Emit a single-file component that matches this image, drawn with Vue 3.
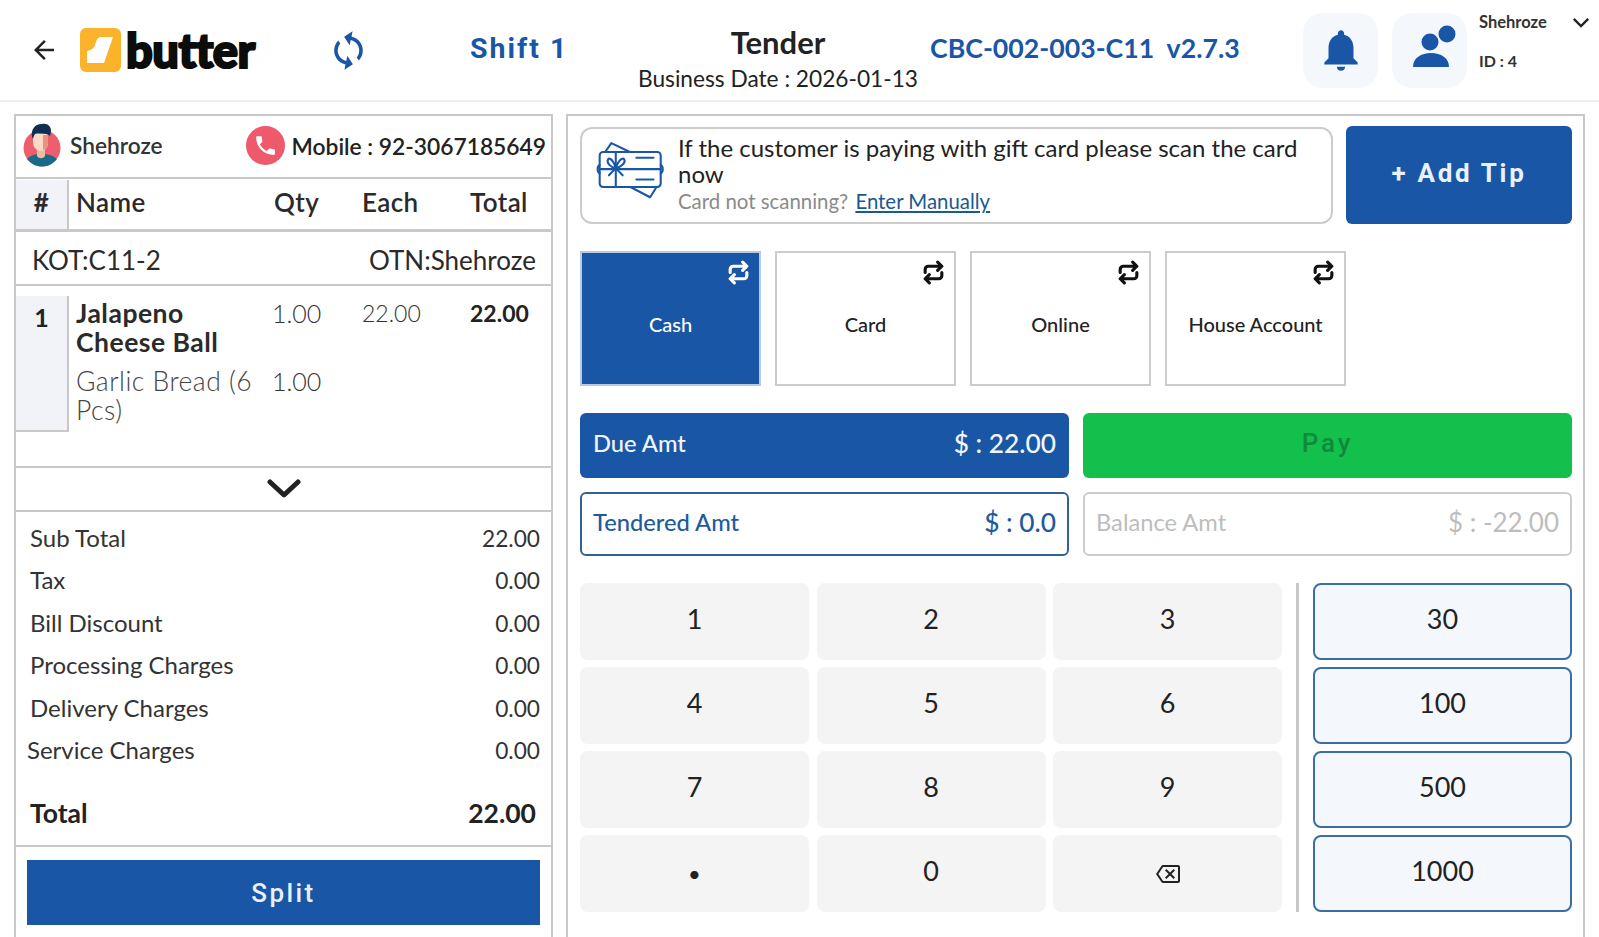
<script setup>
const tiles = [
  { label: 'Cash', active: true },
  { label: 'Card' },
  { label: 'Online' },
  { label: 'House Account' }
]
const keys = ['1', '2', '3', '4', '5', '6', '7', '8', '9', '•', '0', 'back']
const quick = ['30', '100', '500', '1000']
const summary = [
  { label: 'Sub Total', value: '22.00' },
  { label: 'Tax', value: '0.00' },
  { label: 'Bill Discount', value: '0.00' },
  { label: 'Processing Charges', value: '0.00' },
  { label: 'Delivery Charges', value: '0.00' },
  { label: 'Service Charges', value: '0.00', nudge: true }
]
</script>

<template>
  <div class="page">
    <header class="hdr">
      <svg class="back" viewBox="0 0 24 24"><path d="M20 11H7.83l5.59-5.59L12 4l-8 8 8 8 1.41-1.41L7.83 13H20v-2z" /></svg>
      <div class="logo">
        <svg class="logo-mark" viewBox="0 0 41 44">
          <rect width="41" height="44" rx="6" fill="#fbb32b" />
          <path d="M20 9H33L24 35H7V23C12 22 14 20 15 17C16 13 17 10 20 9Z" fill="#fff" />
        </svg>
        <span class="logo-text">butter</span>
      </div>
      <svg class="sync" viewBox="0 0 24 24"><path d="M12 4V1L8 5l4 4V6c3.31 0 6 2.69 6 6 0 1.01-.25 1.97-.7 2.8l1.46 1.46C19.54 15.03 20 13.57 20 12c0-4.42-3.58-8-8-8zm0 14c-3.31 0-6-2.69-6-6 0-1.01.25-1.97.7-2.8L5.24 7.74C4.46 8.97 4 10.43 4 12c0 4.42 3.58 8 8 8v3l4-4-4-4v3z" /></svg>
      <div class="shift">Shift 1</div>
      <div class="title">
        <div class="title-main">Tender</div>
        <div class="title-sub">Business Date : 2026-01-13</div>
      </div>
      <div class="code">CBC-002-003-C11&nbsp;&nbsp;v2.7.3</div>
      <div class="hbox bell">
        <svg viewBox="0 0 24 24"><path d="M12 22c1.1 0 2-.9 2-2h-4c0 1.1.89 2 2 2zm6-6v-5c0-3.07-1.64-5.64-4.5-6.32V4c0-.83-.67-1.5-1.5-1.5s-1.5.67-1.5 1.5v.68C7.63 5.36 6 7.92 6 11v5l-2 2v1h16v-1l-2-2z" /></svg>
      </div>
      <div class="hbox user">
        <svg viewBox="0 0 46 46">
          <circle cx="40" cy="7" r="8.5" />
          <circle cx="23" cy="15" r="8.5" />
          <path d="M6 40C6 31 14 26 24 26C34 26 42 31 42 40Z" />
        </svg>
      </div>
      <div class="uinfo">
        <div class="uname">
          <span>Shehroze</span>
          <svg viewBox="0 0 20 12"><path d="M2 2L10 10L18 2" /></svg>
        </div>
        <div class="uid">ID : 4</div>
      </div>
    </header>

    <main class="main">
      <section class="left">
        <div class="cust">
          <svg class="avatar" viewBox="0 0 38 44">
            <circle cx="19" cy="25" r="18.5" fill="#ee5f6e" />
            <path d="M4 36C8 32 12 31 18 31C24 31 30 32 34 36C30 41 25 43.5 19 43.5C13 43.5 8 41 4 36Z" fill="#1a6a8c" />
            <path d="M14 24H22V33C20 36 16 36 14 33Z" fill="#f0b9a2" />
            <path d="M10 11H25V20C25 25 21 28 17 28C14 28 10 24 10 20Z" fill="#fbd9c6" />
            <path d="M20 12H25V20C25 23 23 26 20 27Z" fill="#e8927f" />
            <path d="M9 14C8 7 11 1 19 1C26 0 30 5 27 13C24 10 20 11 15 10C12 10 11 12 10 16Z" fill="#0f2f52" />
          </svg>
          <span class="cust-name">Shehroze</span>
          <span class="phone">
            <svg viewBox="0 0 24 24"><path d="M6.62 10.79c1.44 2.83 3.76 5.14 6.59 6.59l2.2-2.2c.27-.27.67-.36 1.02-.24 1.12.37 2.33.57 3.57.57.55 0 1 .45 1 1V20c0 .55-.45 1-1 1-9.39 0-17-7.61-17-17 0-.55.45-1 1-1h3.5c.55 0 1 .45 1 1 0 1.25.2 2.45.57 3.57.11.35.03.74-.25 1.02l-2.2 2.2z" /></svg>
          </span>
          <span class="mobile">Mobile : 92-3067185649</span>
        </div>

        <div class="thead">
          <div class="th-num">#</div>
          <div class="th-name">Name</div>
          <div class="th-qty">Qty</div>
          <div class="th-each">Each</div>
          <div class="th-total">Total</div>
        </div>

        <div class="kot">
          <span>KOT:C11-2</span>
          <span>OTN:Shehroze</span>
        </div>

        <div class="items">
          <div class="it-num">1</div>
          <div class="it-body">
            <div class="it-row">
              <div class="it-name strong">Jalapeno Cheese Ball</div>
              <div class="it-qty">1.00</div>
              <div class="it-each">22.00</div>
              <div class="it-total">22.00</div>
            </div>
            <div class="it-row mod">
              <div class="it-name">Garlic Bread (6 Pcs)</div>
              <div class="it-qty">1.00</div>
            </div>
          </div>
        </div>

        <div class="chev">
          <svg viewBox="0 0 34 20"><path d="M3 3L17 16L31 3" /></svg>
        </div>

        <div class="sum">
          <div v-for="row in summary" :key="row.label" class="sum-row" :class="{ nudge: row.nudge }">
            <span class="sum-label">{{ row.label }}</span>
            <span>{{ row.value }}</span>
          </div>
          <div class="sum-total">
            <span>Total</span>
            <span>22.00</span>
          </div>
        </div>

        <div class="split-wrap">
          <button class="split">Split</button>
        </div>
      </section>

      <section class="right">
        <div class="top-row">
          <div class="gift">
            <svg class="gift-icon" viewBox="45 55 200 175">
              <path d="M74 90L92 64L146 90M148 192L205 222L224 192" />
              <rect x="58" y="90" width="178" height="102" rx="10" />
              <path d="M58 140H236M105 90V192M165 107H215M165 170H215" />
              <path d="M105 137C90 135 78 122 82 112C88 103 100 118 105 137C110 118 124 103 130 112C134 122 120 135 105 137L85 158M105 137L125 158" />
              <path d="M58 128C50 132 50 148 58 152M236 128C244 132 244 148 236 152" />
            </svg>
            <div class="gift-text">
              <div class="gift-msg">If the customer is paying with gift card please scan the card now</div>
              <div class="gift-sub">Card not scanning? <a class="gift-link">Enter Manually</a></div>
            </div>
          </div>
          <button class="tip">+ Add Tip</button>
        </div>

        <div class="tiles">
          <div v-for="t in tiles" :key="t.label" class="tile" :class="{ on: t.active }">
            <svg class="tile-ico" viewBox="0 0 24 24"><path d="M16 2l4 4-4 4M4 12V9a3 3 0 0 1 3-3h13M8 22l-4-4 4-4M20 12v3a3 3 0 0 1-3 3H4" /></svg>
            <span class="tile-label">{{ t.label }}</span>
          </div>
        </div>

        <div class="amts">
          <div class="amt due"><span>Due Amt</span><span class="amt-val">$ : 22.00</span></div>
          <div class="amt pay">Pay</div>
          <div class="amt tend"><span>Tendered Amt</span><span class="amt-val">$ : 0.0</span></div>
          <div class="amt bal"><span>Balance Amt</span><span class="amt-val">$ : -22.00</span></div>
        </div>

        <div class="pad">
          <div class="keys">
            <div v-for="k in keys" :key="k" class="key" :class="{ 'key-dot': k === '•', 'key-bk': k === 'back' }">
              <svg v-if="k === 'back'" class="bk" viewBox="0 0 24 24"><path d="M22 3H7c-.69 0-1.23.35-1.59.88L0 12l5.41 8.11c.36.53.9.89 1.59.89h15c1.1 0 2-.9 2-2V5c0-1.1-.9-2-2-2zm0 16H7.07L2.4 12l4.66-7H22v14zm-11.59-2L14 13.41 17.59 17 19 15.59 15.41 12 19 8.41 17.59 7 14 10.59 10.41 7 9 8.41 12.59 12 9 15.59z" /></svg>
              <template v-else>{{ k }}</template>
            </div>
          </div>
          <div class="divider"></div>
          <div class="quick">
            <div v-for="q in quick" :key="q" class="qbtn">{{ q }}</div>
          </div>
        </div>
      </section>
    </main>
  </div>
</template>

<style>
html, body { margin: 0; padding: 0; background: #fff; }
</style>

<style scoped>
* { box-sizing: border-box; }
.page {
  width: 1599px;
  height: 937px;
  overflow: hidden;
  background: #fff;
  font-family: Lato, "Noto Sans", sans-serif;
  color: #222;
}

/* header */
.hdr {
  display: flex;
  align-items: center;
  height: 102px;
  border-bottom: 2px solid #eeeeee;
  padding-left: 29px;
}
.back { width: 30px; height: 30px; fill: #222; flex: none; }
.logo { display: flex; align-items: center; margin-left: 21px; width: 196px; flex: none; }
.logo-mark { width: 41px; height: 44px; flex: none; }
.logo-text {
  margin-left: 5px;
  font-family: Lato, sans-serif;
  font-weight: 900;
  font-size: 47px;
  line-height: 44px;
  letter-spacing: -0.5px;
  color: #0c0c0c;
  -webkit-text-stroke: 2.2px #0c0c0c;
}
.sync { width: 43px; height: 43px; fill: #1a56a6; flex: none; margin-left: 51px; transform: rotate(12deg); }
.shift {
  margin-left: 100px;
  margin-bottom: 4px;
  width: 156px;
  flex: none;
  font-family: Roboto, sans-serif;
  font-weight: 700;
  font-size: 28.5px;
  letter-spacing: 2px;
  color: #1a56a6;
}
.title { width: 304px; flex: none; text-align: center; align-self: flex-start; padding-top: 24px; }
.title-main { font-size: 31px; font-weight: 700; line-height: 36px; color: #222; }
.title-sub { font-size: 22.7px; line-height: 33px; color: #222; margin-top: 2px; }
.code {
  width: 373px;
  flex: none;
  margin-bottom: 4px;
  font-size: 26.7px;
  font-weight: 700;
  color: #1a56a6;
  white-space: nowrap;
}
.hbox {
  width: 75px;
  height: 75px;
  border-radius: 20px;
  background: #f4f8fd;
  display: flex;
  align-items: center;
  justify-content: center;
  flex: none;
}
.bell svg { width: 50px; height: 50px; fill: #1a56a6; }
.user { margin-left: 14px; }
.user svg { width: 46px; height: 46px; fill: #1a56a6; overflow: visible; }
.uinfo { margin-left: 12px; width: 113px; flex: none; align-self: flex-start; }
.uname {
  display: flex;
  align-items: center;
  justify-content: space-between;
  font-size: 16.5px;
  font-weight: 700;
  color: #333;
  margin-top: 13px;
  height: 18px;
}
.uname svg { width: 18px; height: 11px; fill: none; stroke: #222; stroke-width: 2.6; margin-right: 2px; }
.uid { font-size: 16px; font-weight: 700; color: #333; margin-top: 20px; }

/* main */
.main { display: flex; gap: 13px; padding: 12px 14px 0 14px; height: 835px; }
.left {
  width: 539px;
  flex: none;
  border: 2px solid #c8c8c8;
  border-bottom: 0;
  display: flex;
  flex-direction: column;
}
.right {
  flex: 1;
  border: 2px solid #c8c8c8;
  border-bottom: 0;
  padding: 10px 11px 0 12px;
}

/* left */
.cust {
  display: flex;
  align-items: center;
  height: 63px;
  flex: none;
  padding: 0 5px 2px 7px;
  border-bottom: 2px solid #c8c8c8;
}
.avatar { width: 38px; height: 44px; flex: none; margin-top: -1px; }
.cust-name { margin-left: 9px; font-size: 22.7px; font-weight: 600; color: #333; }
.phone {
  margin-left: auto;
  width: 39px;
  height: 39px;
  border-radius: 50%;
  background: #ee5a6c;
  display: flex;
  align-items: center;
  justify-content: center;
  flex: none;
}
.phone svg { width: 25px; height: 25px; fill: #fff; }
.mobile { margin-left: 7px; font-size: 22.8px; font-weight: 600; color: #222; white-space: nowrap; }

.thead {
  display: flex;
  align-items: stretch;
  height: 53px;
  flex: none;
  border-bottom: 3px solid #c8c8c8;
  padding-top: 1px;
  font-size: 26px;
  font-weight: 600;
  letter-spacing: 0.4px;
  color: #2a2a2a;
  line-height: 44px;
}
.th-num {
  width: 53px;
  flex: none;
  background: #f1f3f8;
  border-right: 2px solid #c8c8c8;
  text-align: center;
  font-weight: 700;
}
.th-name { width: 204px; flex: none; padding-left: 7px; }
.th-qty { width: 87px; flex: none; padding-left: 1px; }
.th-each { width: 107px; flex: none; padding-left: 2px; }
.th-total { flex: 1; padding-left: 3px; }

.kot {
  display: flex;
  justify-content: space-between;
  align-items: center;
  height: 54px;
  flex: none;
  padding: 3px 15px 0 16px;
  border-bottom: 2px solid #c8c8c8;
  font-size: 26px;
  color: #2a2a2a;
}

.items {
  display: flex;
  height: 182px;
  flex: none;
  padding-top: 10px;
  border-bottom: 2px solid #c8c8c8;
  align-items: flex-start;
}
.it-num {
  width: 53px;
  height: 136px;
  flex: none;
  background: #f1f3f8;
  border-right: 2px solid #c8c8c8;
  border-bottom: 2px solid #c8c8c8;
  text-align: center;
  font-size: 25px;
  font-weight: 700;
  line-height: 42px;
}
.it-body { flex: 1; padding: 3px 0 0 7px; }
.it-row { display: flex; align-items: flex-start; }
.it-row.mod { margin-top: 10px; }
.it-name { width: 196px; flex: none; font-size: 26.5px; letter-spacing: 0.5px; line-height: 29px; color: #444; font-weight: 300; }
.it-name.strong { font-weight: 700; color: #2a2a2a; padding-right: 24px; }
.it-qty { width: 90px; flex: none; font-size: 25px; line-height: 29px; font-weight: 300; color: #333; }
.it-each { width: 108px; flex: none; font-size: 23px; line-height: 29px; font-weight: 300; color: #333; }
.it-total { font-size: 23px; line-height: 29px; font-weight: 700; color: #222; }

.chev {
  height: 44px;
  flex: none;
  border-bottom: 2px solid #c8c8c8;
  display: flex;
  align-items: center;
  justify-content: center;
}
.chev svg { width: 34px; height: 20px; fill: none; stroke: #222; stroke-width: 5; stroke-linecap: round; stroke-linejoin: round; }

.sum { height: 335px; flex: none; padding: 5px 11px 0 14px; border-bottom: 2px solid #c8c8c8; }
.sum-row {
  display: flex;
  justify-content: space-between;
  height: 42.5px;
  align-items: center;
  font-size: 22.7px;
  color: #333;
}
.sum-label { font-size: 24px; margin-top: -2px; }
.sum-row.nudge .sum-label { margin-left: -3px; }
.sum-total {
  display: flex;
  justify-content: space-between;
  align-items: center;
  margin-top: 20px;
  height: 42px;
  font-size: 26.5px;
  font-weight: 700;
  color: #222;
  padding-right: 4px;
}
.split-wrap { padding: 13px 11px 0 11px; }
.split {
  display: block;
  width: 100%;
  height: 65px;
  border: 0;
  background: #1a56a6;
  color: #e9f1fb;
  font-family: Roboto, sans-serif;
  font-size: 26px;
  font-weight: 500;
  letter-spacing: 2.4px;
}

/* right */
.top-row { display: flex; gap: 13px; height: 98px; }
.gift {
  width: 753px;
  flex: none;
  height: 97px;
  margin-top: 1px;
  border: 2px solid #cccccc;
  border-radius: 12px;
  display: flex;
  padding: 6px 8px 0 13px;
}
.gift-icon {
  width: 69px;
  height: 60px;
  flex: none;
  margin-top: 5px;
  fill: none;
  stroke: #1a56a6;
  stroke-width: 6;
  stroke-linejoin: round;
  stroke-linecap: round;
}
.gift-text { margin-left: 14px; min-width: 0; }
.gift-msg { font-size: 24px; line-height: 26px; color: #222; width: 635px; }
.gift-sub { font-size: 20.4px; line-height: 26px; margin-top: 1px; color: #8a8a8a; }
.gift-link { color: #1a5a8f; text-decoration: underline; margin-left: 2px; }
.tip {
  flex: 1;
  border: 0;
  border-radius: 6px;
  padding: 0 0 4px;
  background: #1a56a6;
  color: #e9f1fb;
  font-family: Roboto, sans-serif;
  font-weight: 700;
  font-size: 26px;
  letter-spacing: 2.7px;
  min-width: 0;
}

.tiles { display: flex; gap: 14px; margin-top: 27px; }
.tile {
  position: relative;
  width: 181px;
  height: 135px;
  border: 2px solid #cccccc;
  display: flex;
  align-items: center;
  justify-content: center;
  font-size: 20px;
  font-weight: 500;
  color: #222;
}
.tile.on { background: #1a56a6; color: #fff; border-color: #b9cbe2; }
.tile-label { margin-top: 11px; }
.tile-ico {
  position: absolute;
  top: 7px;
  right: 8px;
  width: 25px;
  height: 25px;
  fill: none;
  stroke: #111;
  stroke-width: 3;
  stroke-linecap: round;
  stroke-linejoin: round;
}
.tile.on .tile-ico { stroke: #fff; }

.amts {
  display: grid;
  grid-template-columns: 489px 489px;
  grid-template-rows: 65px 64px;
  column-gap: 14px;
  row-gap: 14px;
  margin-top: 27px;
}
.amt {
  border-radius: 6px;
  display: flex;
  align-items: center;
  justify-content: space-between;
  padding: 0 13px 5px;
  font-size: 23.7px;
}
.amt-val { font-size: 26.3px; }
.due { background: #1a56a6; color: #f1f6fc; font-weight: 500; }
.pay {
  background: #13c04c;
  color: #0f8a3c;
  justify-content: center;
  font-family: Roboto, sans-serif;
  font-weight: 500;
  font-size: 26px;
  letter-spacing: 2.8px;
}
.tend { border: 2px solid #2f6299; color: #1f5a9e; padding-left: 11px; padding-right: 11px; font-weight: 500; }
.bal { border: 2px solid #cccccc; color: #bdbdbd; padding-left: 11px; padding-right: 11px; padding-bottom: 4px; }
.bal .amt-val { font-size: 26px; }

.pad { display: flex; margin-top: 27px; height: 329px; }
.keys {
  width: 702px;
  flex: none;
  display: grid;
  grid-template-columns: repeat(3, 229px);
  grid-template-rows: repeat(4, 76.5px);
  column-gap: 7.5px;
  row-gap: 7.5px;
}
.key {
  background: #f4f4f4;
  border-radius: 8px;
  display: flex;
  align-items: center;
  justify-content: center;
  padding-bottom: 6px;
  font-size: 27px;
  color: #222;
}
.key-dot { font-size: 22px; padding-bottom: 0; }
.key-bk { padding-bottom: 0; }
.bk { width: 24px; height: 24px; fill: #222; margin-top: 2px; }
.divider { width: 3px; margin-left: 14px; background: #c8c8c8; flex: none; }
.quick {
  margin-left: 14px;
  width: 259px;
  flex: none;
  display: grid;
  grid-template-rows: repeat(4, 76.5px);
  row-gap: 7.5px;
}
.qbtn {
  background: #f4f8fd;
  border: 2px solid #3a6ea5;
  border-radius: 8px;
  display: flex;
  align-items: center;
  justify-content: center;
  padding-bottom: 6px;
  font-size: 27px;
  color: #222;
}
</style>
